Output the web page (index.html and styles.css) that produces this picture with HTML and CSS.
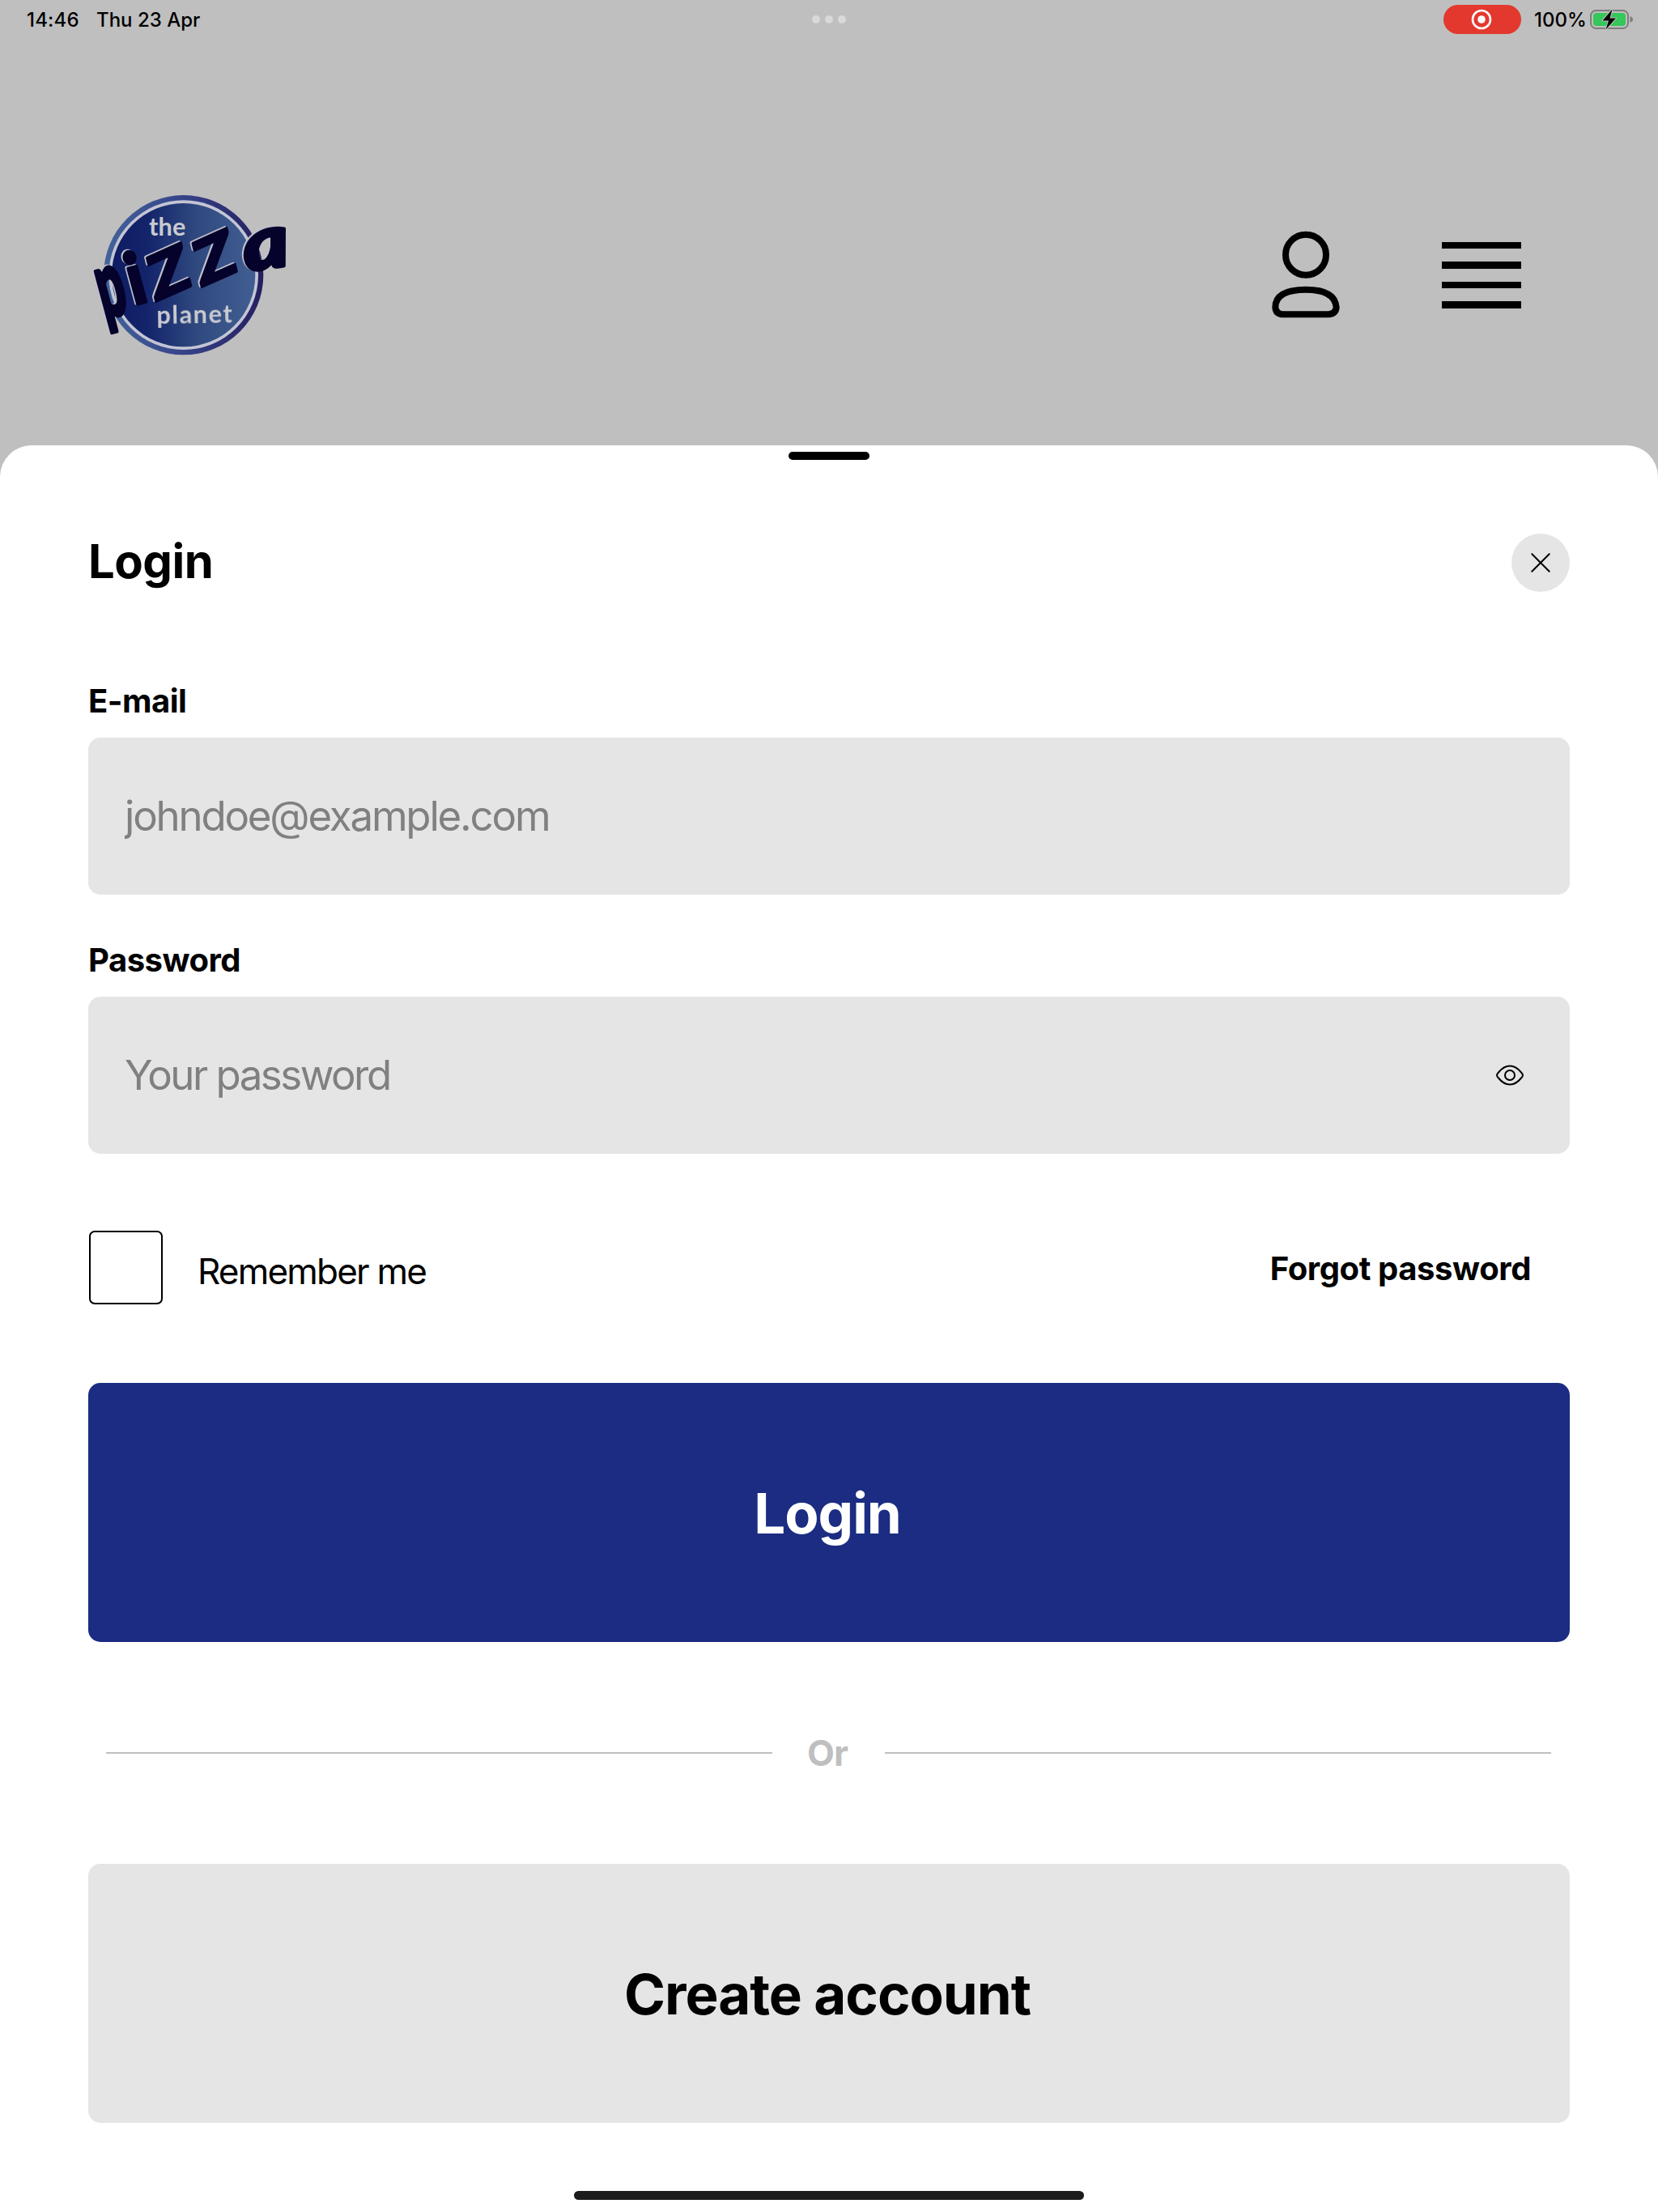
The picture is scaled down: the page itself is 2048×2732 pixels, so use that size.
FILE: index.html
```html
<!DOCTYPE html>
<html lang="en">
<head>
<meta charset="utf-8">
<title>Login</title>
<link rel="stylesheet" href="styles.css">
</head>
<body>
<div class="status">
	<span class="time">14:46</span>
	<span class="date">Thu 23 Apr</span>
	<div class="dots"><i></i><i></i><i></i></div>
	<div class="rec">
		<svg width="26" height="26" viewBox="0 0 26 26"><circle cx="13" cy="13" r="11" fill="none" stroke="#fff" stroke-width="2.6"/><circle cx="13" cy="13" r="4.8" fill="#fff"/></svg>
	</div>
	<span class="percent">100%</span>
	<svg class="battery" width="54" height="28" viewBox="0 0 54 28">
		<rect x="1" y="3" width="46" height="22" rx="6.5" fill="none" stroke="#7d7d7d" stroke-width="2"/>
		<rect x="4" y="6" width="40" height="16" rx="4" fill="#34c759"/>
		<path d="M49.500 10v8q3.500-1.500 3.500-4t-3.500-4z" fill="#7d7d7d"/>
		<path d="M27.500 1.500L15.500 15.500H23L19.500 26.500L32 12.500H24.500z" fill="#000" stroke="#bfbfbf" stroke-width="2" stroke-linejoin="round" paint-order="stroke"/>
	</svg>
</div>
<div class="header">
	<svg class="logo" width="270" height="240" viewBox="0 0 810 720">
		<defs>
			<linearGradient id="ring"><stop offset="0" stop-color="#42649a"/><stop offset=".5" stop-color="#36438a"/><stop offset="1" stop-color="#251f60"/></linearGradient>
			<linearGradient id="disc"><stop offset="0" stop-color="#0d1c63"/><stop offset=".25" stop-color="#14246b"/><stop offset=".6" stop-color="#304a80"/><stop offset="1" stop-color="#415e92"/></linearGradient>
		</defs>
		<circle cx="380" cy="359" r="296" fill="url(#ring)"/>
		<circle cx="380" cy="359" r="277" fill="#c4c5d4"/>
		<circle cx="380" cy="359" r="266" fill="url(#disc)"/>
		<text class="small" x="252" y="213" textLength="136">the</text>
		<g class="big">
			<text transform="translate(88 520) rotate(-15) scale(.74 1.45)">p</text>
			<text transform="translate(196 470) rotate(-15) scale(1 1.12)">i</text>
			<text transform="translate(275 458) rotate(-14) skewY(-10) scale(1.05 .96)">Z</text>
			<text transform="translate(445 404) rotate(-14) skewY(-10) scale(1.05 .96)">Z</text>
			<text class="last" transform="translate(612 346) rotate(-8) scale(1.2 1.02)">a</text>
		</g>
		<text class="small" x="281" y="540" textLength="280" transform="rotate(-1 281 540)">planet</text>
	</svg>
	<div class="icons">
		<svg width="86" height="108" viewBox="0 0 258 324" fill="none" stroke="#000" stroke-width="24">
			<circle cx="129" cy="89" r="75"/>
			<path d="M129 218C72 218 16 231 16 284Q18 310 46 310H212Q240 308 242 284C238 231 186 218 129 218z"/>
		</svg>
		<div class="menu"><i></i><i></i><i></i><i></i></div>
	</div>
</div>
<div class="sheet">
	<div class="handle"></div>
	<div class="title">
		<h1>Login</h1>
		<button class="close"><svg width="24" height="24" viewBox="0 0 24 24" stroke="#000" stroke-width="2" stroke-linecap="round"><path d="M1.300 1.300L22.700 22.700M22.700 1.300L1.300 22.700"/></svg></button>
	</div>
	<label class="lbl" for="email">E-mail</label>
	<div class="field"><input id="email" type="text" placeholder="johndoe@example.com"></div>
	<label class="lbl second" for="password">Password</label>
	<div class="field">
		<input class="pass" id="password" type="password" placeholder="Your password">
		<svg width="36" height="28" viewBox="0 0 36 28" fill="none" stroke="#000" stroke-width="2"><path d="M2 14Q2 12.500 4 10.500Q10.500 2.500 18 2.500T32 10.500Q34 12.500 34 14T32 17.500Q25.500 25.500 18 25.500T4 17.500Q2 15.500 2 14z"/><circle cx="18" cy="14" r="6"/></svg>
	</div>
	<div class="options">
		<span class="check"></span>
		<span class="remember">Remember me</span>
		<a class="forgot">Forgot password</a>
	</div>
	<button class="btn loginBtn">Login</button>
	<div class="or"><span>Or</span></div>
	<button class="btn createBtn">Create account</button>
	<div class="home"></div>
</div>
</body>
</html>
```
FILE: styles.css
```css
* {
	box-sizing:border-box;
}
body {
	margin:0;
	height:2732px;
	overflow:hidden;
	background:#bfbfbf;
	font-family:Inter, "Liberation Sans", sans-serif;
	color:#000;
}
svg {
	display:block;
}
button {
	border:0;
	padding:0;
	font-family:inherit;
}
.status {
	position:relative;
	display:flex;
	align-items:center;
	height:48px;
	padding:0 30px 0 33px;
	font-size:24px;
	font-weight:500;
}
.time {
	width:86px;
	letter-spacing:.2px;
}
.dots {
	position:absolute;
	left:1003px;
	top:19px;
	display:flex;
	gap:6px;
}
.dots i {
	width:10px;
	height:10px;
	border-radius:50%;
	background:#d9d9d9;
}
.rec {
	display:flex;
	align-items:center;
	justify-content:center;
	width:96px;
	height:36px;
	margin-left:auto;
	padding-right:2px;
	border-radius:18px;
	background:#e3382e;
}
.percent {
	width:69px;
	margin-left:16px;
}
.battery {
	width:54px;
}
.header {
	display:flex;
	justify-content:space-between;
	height:502px;
	padding:172px 169px 0 100px;
}
.logo {
	overflow:visible;
}
.logo .small {
	font:700 92px "Lato", sans-serif;
	fill:#c9cad0;
}
.logo .big {
	font:900 235px "Lato", sans-serif;
	fill:#05022b;
	stroke:#05022b;
	stroke-width:11;
	stroke-linejoin:round;
	filter:drop-shadow(-6px -3px 0 #c0c1cc);
}
.logo .last {
	font-size:270px;
	font-style:italic;
}
.icons {
	display:flex;
	padding-top:65px;
}
.menu {
	display:flex;
	flex-direction:column;
	gap:16px;
	width:98px;
	margin:14px 0 0 125px;
}
.menu i {
	height:8.400px;
	background:#000;
}
.sheet {
	height:2182px;
	padding:8px 109px 0;
	border-radius:39px 39px 0 0;
	background:#fff;
}
.handle {
	width:100px;
	height:10px;
	margin:0 auto;
	border-radius:5px;
	background:#000;
}
.title {
	display:flex;
	justify-content:space-between;
	align-items:center;
	height:72px;
	margin:91px 0 107px;
}
.title h1 {
	margin:0 0 4px;
	font-size:58px;
	font-weight:700;
	letter-spacing:-.5px;
}
.close {
	display:flex;
	align-items:center;
	justify-content:center;
	width:72px;
	height:72px;
	border-radius:50%;
	background:#e5e5e5;
}
.lbl {
	display:block;
	height:56px;
	margin-bottom:17px;
	line-height:56px;
	font-size:40px;
	font-weight:700;
	letter-spacing:-.5px;
}
.second {
	margin-top:53px;
}
.field {
	display:flex;
	align-items:center;
	height:194px;
	padding:0 56px 0 45px;
	border-radius:15px;
	background:#e5e5e5;
}
.field input {
	flex:1;
	height:80px;
	margin-bottom:2px;
	padding:0;
	border:0;
	background:none;
	font-family:inherit;
	font-size:51px;
	letter-spacing:-2.2px;
}
.field .pass {
	letter-spacing:-2.5px;
}
.field input::placeholder {
	color:#808080;
}
.options {
	display:flex;
	align-items:center;
	height:91px;
	margin:95px 0 97px;
	padding:0 48px 0 1px;
}
.check {
	width:91px;
	height:91px;
	border:2px solid #000;
	border-radius:7px;
}
.remember {
	padding:9px 0 0 43px;
	font-size:44px;
	letter-spacing:-1.8px;
}
.forgot {
	margin-left:auto;
	padding-top:2px;
	font-size:40px;
	font-weight:700;
	letter-spacing:-.4px;
}
.btn {
	display:block;
	width:100%;
	height:320px;
	padding:2px 4px 0 0;
	border-radius:15px;
	font-size:69px;
	font-weight:700;
	letter-spacing:-1px;
}
.loginBtn {
	background:#1b2c82;
	color:#fff;
}
.createBtn {
	background:#e5e5e5;
	color:#000;
}
.or {
	display:flex;
	align-items:center;
	height:60px;
	margin:107px 0;
	padding:0 23px 0 22px;
	font-size:44px;
	font-weight:700;
	letter-spacing:-1px;
	color:#bfbfbf;
}
.or:before, .or:after {
	content:"";
	flex:1;
	height:2px;
	background:#bfbfbf;
}
.or span {
	width:139px;
	padding-right:3px;
	text-align:center;
}
.home {
	width:630px;
	height:11px;
	margin:84px auto 0;
	border-radius:6px;
	background:#1c1c1c;
}
```
